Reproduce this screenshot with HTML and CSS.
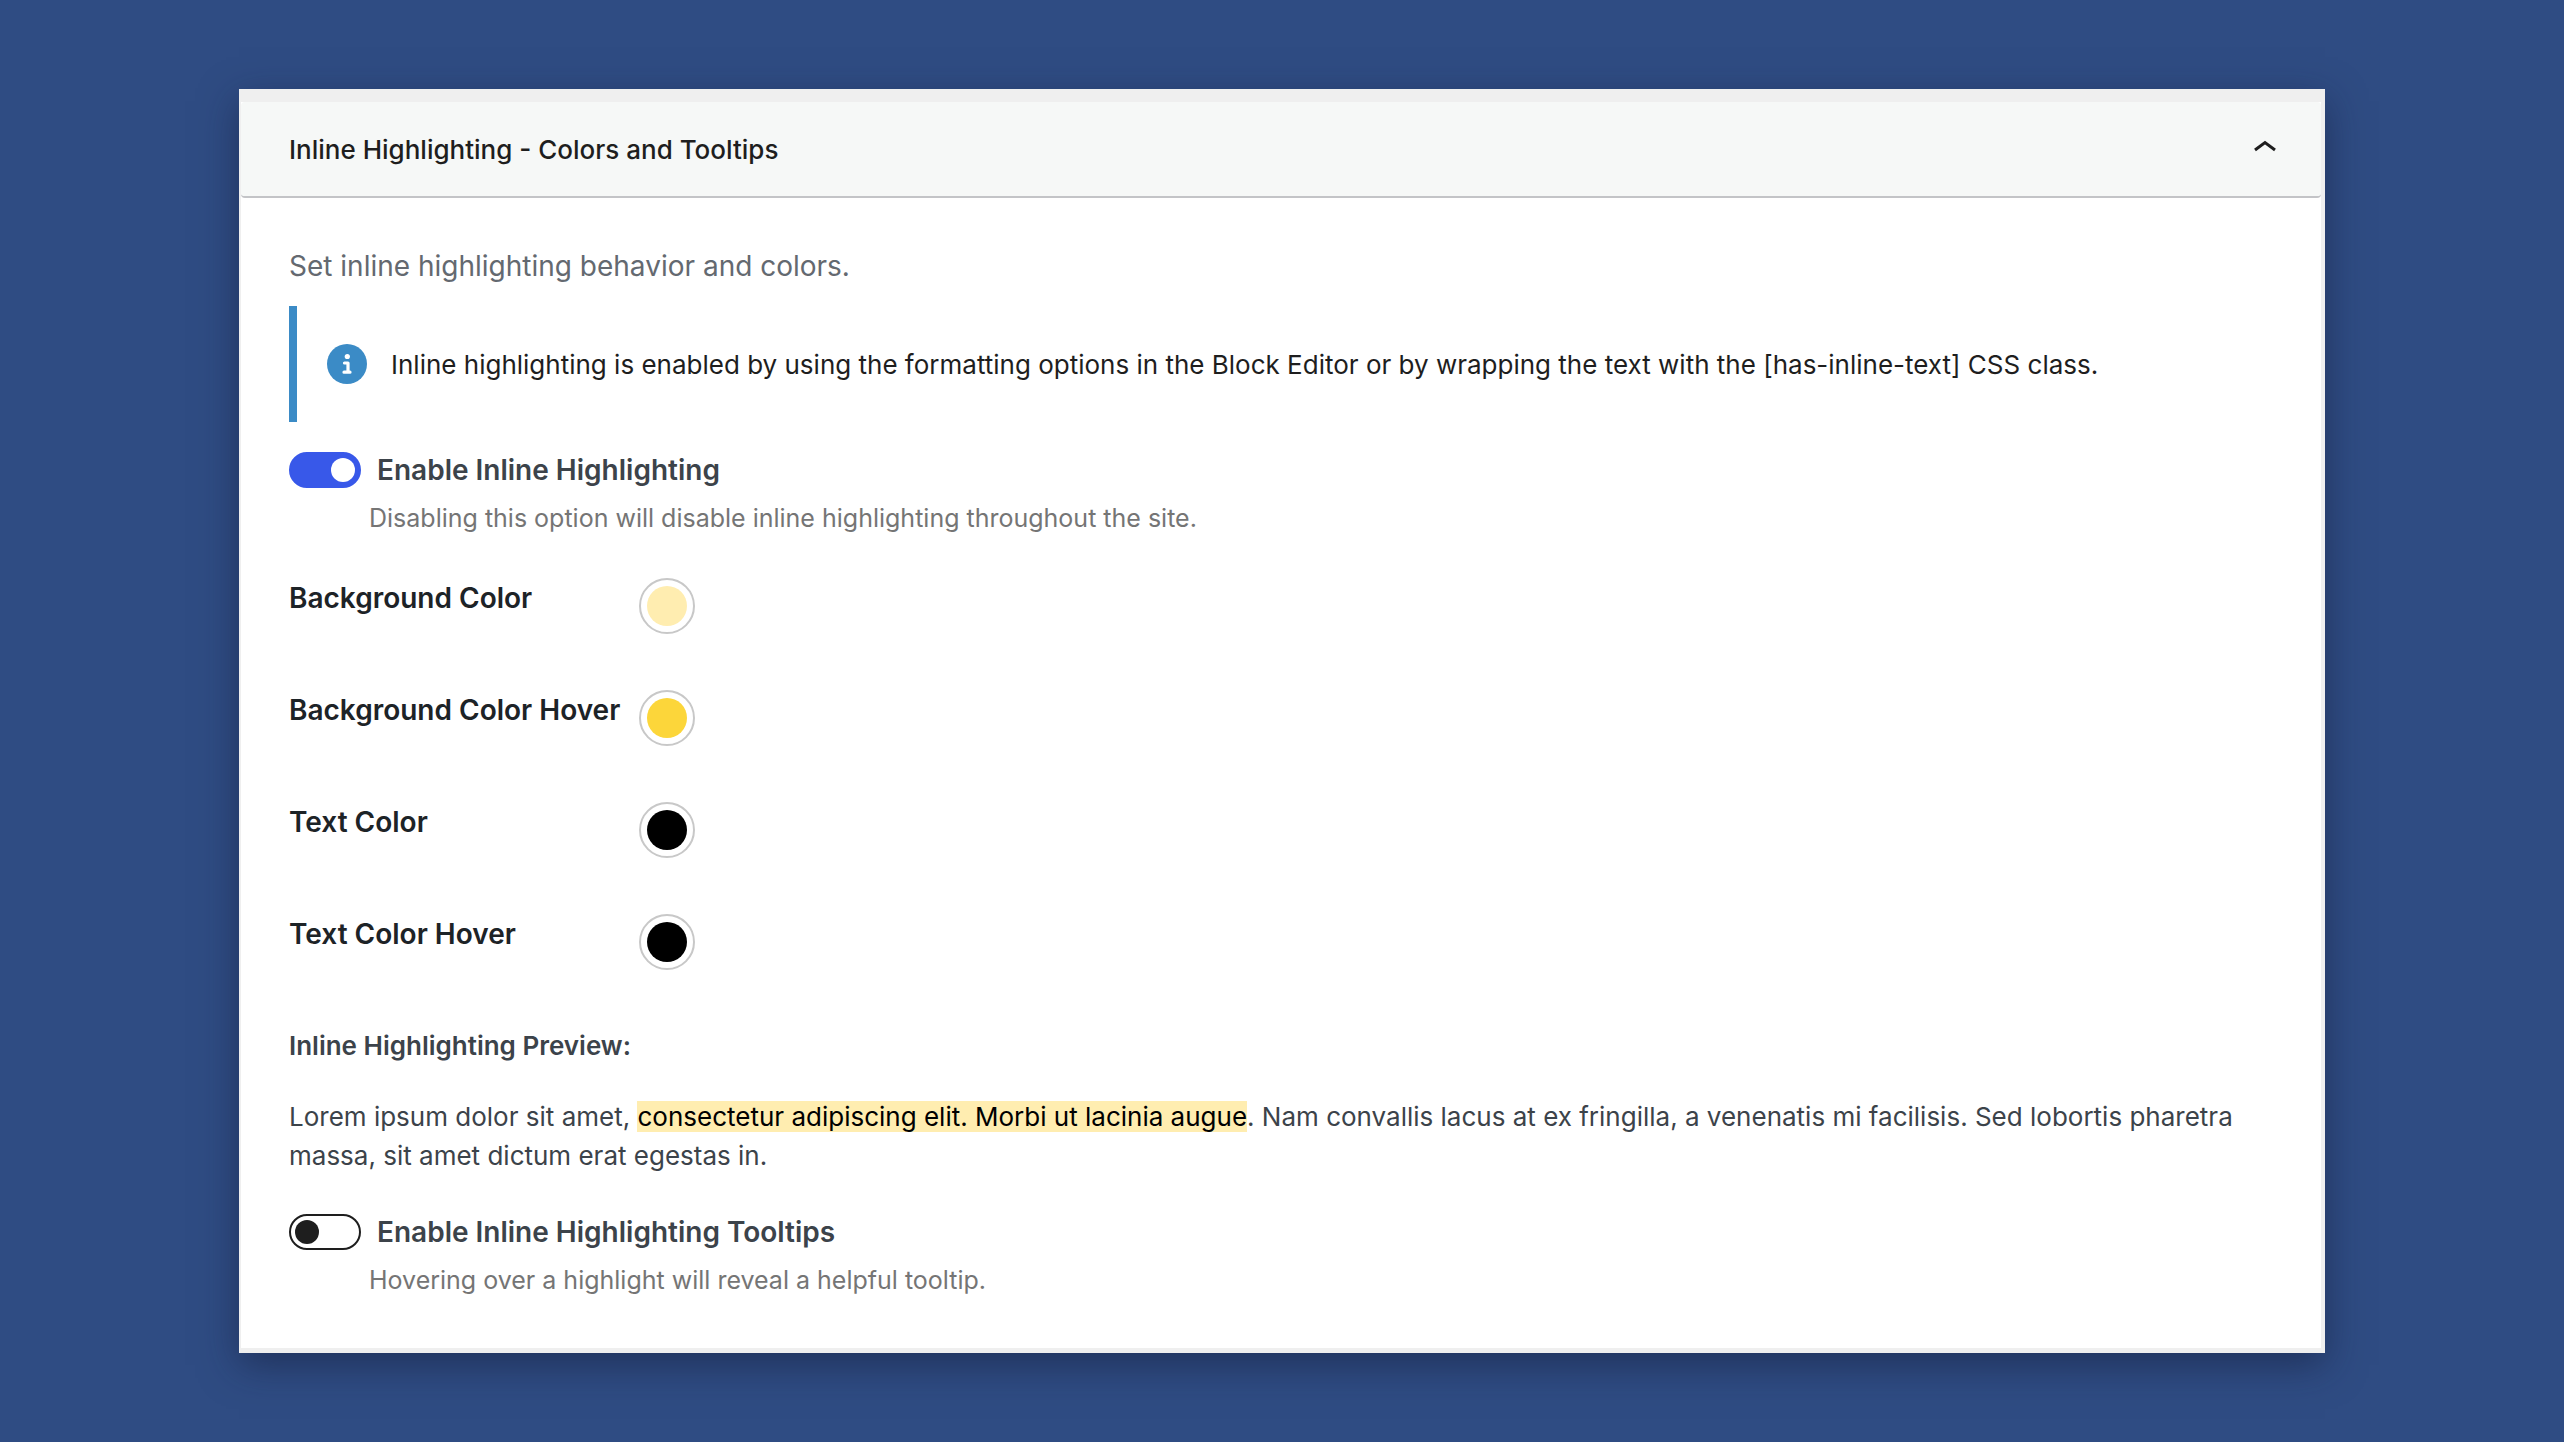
FILE: index.html
```
<!DOCTYPE html>
<html lang="en">
<head>
  <meta charset="utf-8">
  <title>Inline Highlighting Settings</title>
  <link rel="stylesheet" href="styles.css">
</head>
<body>
  <main class="panel">
    <h2 class="panel-heading">
      <button type="button" class="panel-toggle" aria-expanded="true" aria-controls="panel-body">
        <span>Inline Highlighting - Colors and Tooltips</span>
        <svg class="chevron" viewBox="0 0 48 48" aria-hidden="true">
          <path d="M14 25 L24 17.5 L34 25" fill="none" stroke="#1e1e1e" stroke-width="3"/>
        </svg>
      </button>
    </h2>

    <div class="panel-body" id="panel-body">
      <p class="description">Set inline highlighting behavior and colors.</p>

      <div class="notice">
        <svg class="notice-icon" viewBox="0 0 40 40" aria-hidden="true">
          <circle cx="20" cy="20" r="20" fill="#3b8bc6"/>
          <circle cx="20.3" cy="12.5" r="2.6" fill="#fff"/>
          <path d="M17.5 19 H21 V28 M17 28.2 H23" fill="none" stroke="#fff" stroke-width="3.2" stroke-linecap="round" stroke-linejoin="round"/>
        </svg>
        <p>Inline highlighting is enabled by using the formatting options in the Block Editor or by wrapping the text with the [has-inline-text] CSS class.</p>
      </div>

      <div class="toggle-field">
        <div class="toggle-row">
          <input type="checkbox" class="switch" id="enable-highlighting" aria-describedby="highlighting-help" checked>
          <label for="enable-highlighting">Enable Inline Highlighting</label>
        </div>
        <p class="help" id="highlighting-help">Disabling this option will disable inline highlighting throughout the site.</p>
      </div>

      <div class="colors">
        <div class="color-row">
          <label for="bg-color">Background Color</label>
          <input type="color" class="swatch" id="bg-color" value="#ffedb0">
        </div>
        <div class="color-row">
          <label for="bg-color-hover">Background Color Hover</label>
          <input type="color" class="swatch" id="bg-color-hover" value="#fcd63a">
        </div>
        <div class="color-row">
          <label for="text-color">Text Color</label>
          <input type="color" class="swatch" id="text-color" value="#000000">
        </div>
        <div class="color-row">
          <label for="text-color-hover">Text Color Hover</label>
          <input type="color" class="swatch" id="text-color-hover" value="#000000">
        </div>
      </div>

      <div class="preview">
        <h3>Inline Highlighting Preview:</h3>
        <p>Lorem ipsum dolor sit amet, <mark>consectetur adipiscing elit. Morbi ut lacinia augue</mark>. Nam convallis lacus at ex fringilla, a venenatis mi facilisis. Sed lobortis pharetra massa, sit amet dictum erat egestas in.</p>
      </div>

      <div class="toggle-field">
        <div class="toggle-row">
          <input type="checkbox" class="switch" id="enable-tooltips" aria-describedby="tooltips-help">
          <label for="enable-tooltips">Enable Inline Highlighting Tooltips</label>
        </div>
        <p class="help" id="tooltips-help">Hovering over a highlight will reveal a helpful tooltip.</p>
      </div>
    </div>
  </main>
</body>
</html>
```
FILE: styles.css
```
* {
  box-sizing: border-box;
}

body {
  display: flex;
  justify-content: center;
  align-items: center;
  min-height: 100vh;
  margin: 0;
  padding: 48px 239px;
  background-color: #2f4c83;
  color: #3c434a;
  font-family: Inter, sans-serif;
  font-size: 26px;
  line-height: 39px;
}

h2,
h3,
p {
  margin: 0;
}

.panel {
  flex: 1;
  background-color: #fff;
  border: solid #efefef;
  border-width: 13px 4px 5px 2px;
  box-shadow: 0 12px 36px rgba(20, 30, 60, 0.55);
}

.panel-heading {
  font-size: 26px;
}

.panel-toggle {
  display: flex;
  justify-content: space-between;
  align-items: center;
  width: 100%;
  height: 96px;
  padding: 0 32px 0 48px;
  background-color: #f6f8f7;
  border: none;
  border-bottom: 2px solid #c3c4c7;
  border-radius: 4px;
  color: #1e1e1e;
  font: inherit;
  font-weight: 500;
  cursor: pointer;
}

.chevron {
  width: 48px;
  height: 48px;
}

.panel-body {
  padding: 48px;
}

.description {
  margin-bottom: 20px;
  color: #646970;
  font-size: 28px;
  line-height: 40px;
}

.notice {
  display: flex;
  align-items: center;
  gap: 24px;
  min-height: 116px;
  margin-bottom: 28px;
  padding-left: 30px;
  border-left: 8px solid #3b8bc6;
  color: #1e1e1e;
}

.notice-icon {
  flex: none;
  width: 40px;
  height: 40px;
}

.toggle-row {
  display: flex;
  align-items: center;
  gap: 16px;
  font-size: 28px;
  font-weight: 600;
  line-height: 40px;
}

.switch {
  appearance: none;
  width: 72px;
  height: 36px;
  margin: 0;
  padding: 4px;
  border: 2px solid #1e1e1e;
  border-radius: 18px;
  background-color: #fff;
  cursor: pointer;
}

.switch::before {
  content: "";
  display: block;
  width: 24px;
  height: 24px;
  border-radius: 50%;
  background-color: #1e1e1e;
}

.switch:checked {
  border-color: #3858e9;
  background-color: #3858e9;
}

.switch:checked::before {
  margin-left: auto;
  background-color: #fff;
}

.help {
  margin-top: 8px;
  padding-left: 80px;
  color: #757575;
  font-size: 25px;
  line-height: 40px;
}

.colors {
  display: grid;
  gap: 56px;
  margin: 40px 0 56px;
}

.color-row {
  display: grid;
  grid-template-columns: 334px 56px;
  gap: 16px;
  color: #1d2327;
  font-size: 28px;
  font-weight: 600;
  line-height: 40px;
}

.swatch {
  appearance: none;
  width: 56px;
  height: 56px;
  padding: 6px;
  background-color: #fff;
  border: 2px solid #c8c8c8;
  border-radius: 50%;
  cursor: pointer;
}

.swatch::-webkit-color-swatch-wrapper {
  padding: 0;
}

.swatch::-webkit-color-swatch {
  border: none;
  border-radius: 50%;
}

.preview {
  margin-bottom: 37px;
}

.preview h3 {
  margin-bottom: 32px;
  font-size: 26px;
  font-weight: 600;
}

mark {
  background-color: #ffedb0;
  color: #000;
}
```
